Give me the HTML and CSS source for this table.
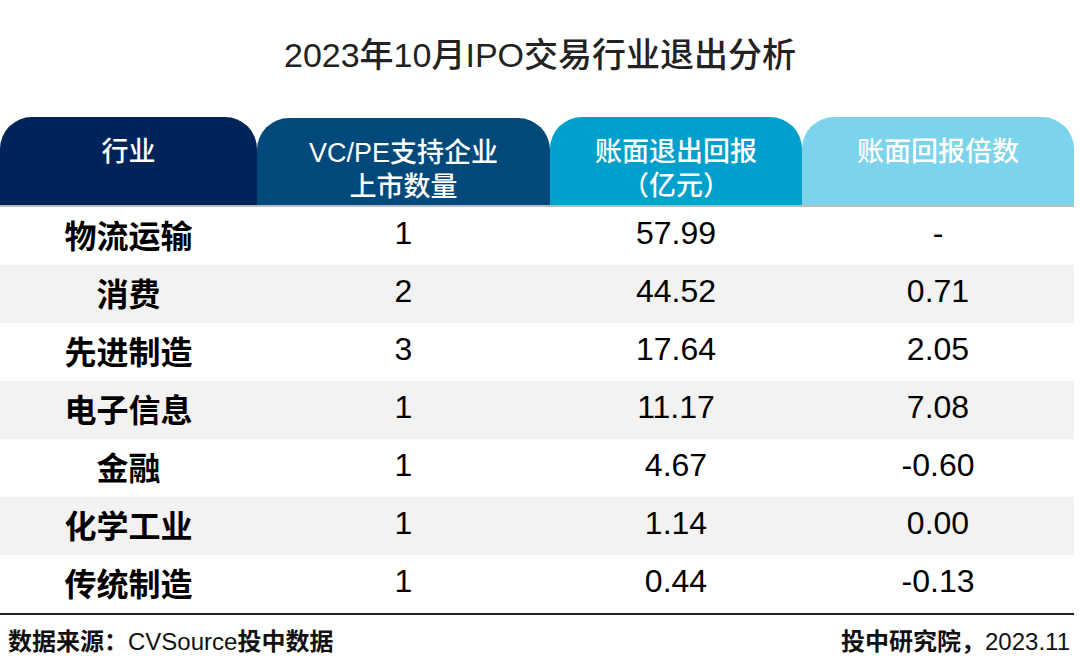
FILE: index.html
```html
<!DOCTYPE html>
<html lang="zh-CN">
<head>
<meta charset="utf-8">
<link rel="stylesheet" href="styles.css">
</head>
<body>
<div class="page">
  <h1 class="title">2023年10月IPO交易行业退出分析</h1>
  <div class="table">
    <div class="head">
      <div class="th c1">行业</div>
      <div class="th c2">VC/PE支持企业<br>上市数量</div>
      <div class="th c3">账面退出回报<br>（亿元）</div>
      <div class="th c4">账面回报倍数</div>
    </div>
    <div class="row"><div class="name">物流运输</div><div>1</div><div>57.99</div><div>-</div></div>
    <div class="row alt"><div class="name">消费</div><div>2</div><div>44.52</div><div>0.71</div></div>
    <div class="row"><div class="name">先进制造</div><div>3</div><div>17.64</div><div>2.05</div></div>
    <div class="row alt"><div class="name">电子信息</div><div>1</div><div>11.17</div><div>7.08</div></div>
    <div class="row"><div class="name">金融</div><div>1</div><div>4.67</div><div>-0.60</div></div>
    <div class="row alt"><div class="name">化学工业</div><div>1</div><div>1.14</div><div>0.00</div></div>
    <div class="row last"><div class="name">传统制造</div><div>1</div><div>0.44</div><div>-0.13</div></div>
  </div>
  <div class="footer">
    <span class="src"><b class="cjk">数据来源：</b>CVSource<b class="cjk">投中数据</b></span>
    <span class="org"><b class="cjk">投中研究院，</b>2023.11</span>
  </div>
</div>
</body>
</html>
```

FILE: styles.css
```css
* { box-sizing: border-box; }
html, body { margin: 0; padding: 0; background: #fff; }
body {
  font-family: "Liberation Sans", "Noto Sans CJK SC", sans-serif;
  color: #000;
  width: 1080px;
  height: 669px;
  overflow: hidden;
}
.page { width: 1080px; }
.title {
  margin: 0;
  height: 117px;
  display: flex;
  align-items: center;
  justify-content: center;
  padding-bottom: 12px;
  font-family: "Liberation Sans", "Noto Sans CJK SC Medium", "Noto Sans CJK SC", sans-serif;
  font-size: 34px;
  font-weight: 500;
  color: #222;
}
.table { width: 1074px; }
.head {
  display: grid;
  grid-template-columns: 257px 293px 252px 272px;
  height: 90px;
  border-bottom: 2px solid #b9bcbf;
}
.th {
  border-radius: 32px 32px 0 0;
  color: #fff;
  font-family: "Liberation Sans", "Noto Sans CJK SC Medium", "Noto Sans CJK SC", sans-serif;
  font-size: 27px;
  font-weight: 500;
  line-height: 34px;
  text-align: center;
  padding-top: 18px;
}
.c1 { background: #00245a; }
.c2 { background: #02497b; margin-top: 1px; }
.c3 { background: #00a0cc; }
.c4 { background: #7bd3ec; }
.row {
  display: grid;
  grid-template-columns: 257px 293px 252px 272px;
  height: 58px;
  align-items: center;
  text-align: center;
  font-size: 32px;
  padding-bottom: 5px;
}
.row.alt { background: #f2f2f2; }
.row.last { border-bottom: 2px solid #222; height: 60px; }
.name { font-weight: 700; }
.footer {
  display: flex;
  justify-content: space-between;
  align-items: center;
  height: 55px;
  padding: 0 8px 6px 8px;
  font-size: 24px;
  font-weight: 400;
  color: #111;
}
.cjk { font-weight: 700; }
.org { padding-right: 2px; }
```
